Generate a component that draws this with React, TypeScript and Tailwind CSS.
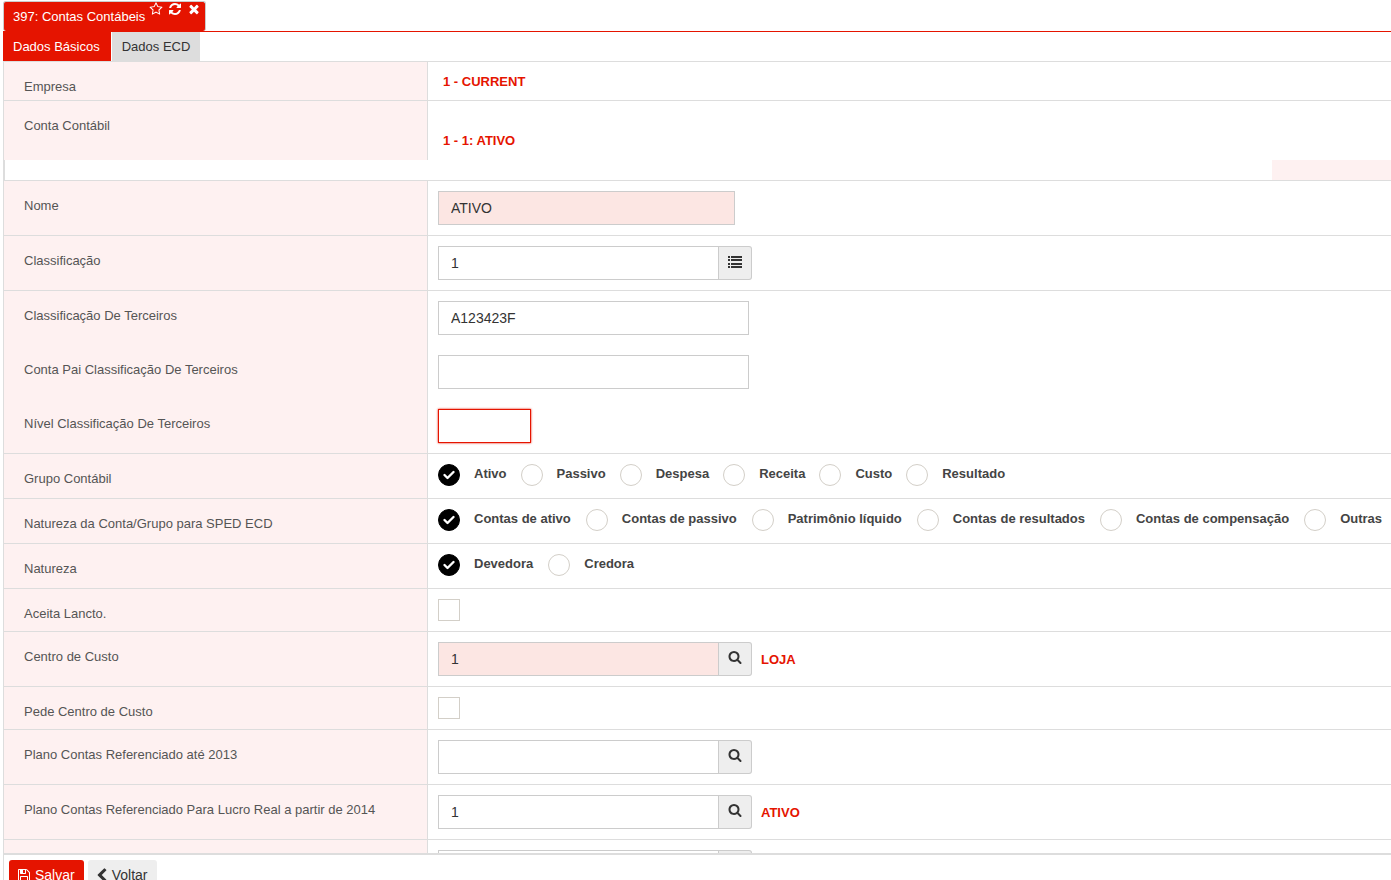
import { useState } from "react";
import type { ReactNode } from "react";

const icons = {
    star: "M1201 1004l306-297-422-62-189-382-189 382-422 62 306 297-73 421 378-199 377 199zm527-357q0 22-26 48l-363 354 86 500q1 7 1 20 0 50-41 50-19 0-40-12l-449-236-449 236q-22 12-40 12-21 0-31.5-14.5t-10.5-35.5q0-6 2-20l86-500-364-354q-25-27-25-48 0-37 56-46l502-73 225-455q19-41 49-41t49 41l225 455 502 73q56 9 56 46z",
    refresh: "M1639 1056q0 5-1 7-64 268-268 434.5t-478 166.5q-146 0-282.5-55t-243.5-157l-129 129q-19 19-45 19t-45-19-19-45v-448q0-26 19-45t45-19h448q26 0 45 19t19 45-19 45l-137 137q71 66 161 102t187 36q134 0 250-65t186-179q11-17 53-117 8-23 30-23h192q13 0 22.5 9.5t9.5 22.5zm25-800v448q0 26-19 45t-45 19h-448q-26 0-45-19t-19-45 19-45l138-138q-148-137-349-137-134 0-250 65t-186 179q-11 17-53 117-8 23-30 23h-199q-13 0-22.5-9.5t-9.5-22.5v-7q65-268 270-434.5t480-166.5q146 0 284 55.5t245 156.5l130-129q19-19 45-19t45 19 19 45z",
    close: "M1490 1322q0 40-28 68l-136 136q-28 28-68 28t-68-28l-294-294-294 294q-28 28-68 28t-68-28l-136-136q-28-28-28-68t28-68l294-294-294-294q-28-28-28-68t28-68l136-136q28-28 68-28t68 28l294 294 294-294q28-28 68-28t68 28l136 136q28 28 28 68t-28 68l-294 294 294 294q28 28 28 68z",
    search: "M1216 832q0-185-131.5-316.5t-316.5-131.5-316.5 131.5-131.5 316.5 131.5 316.5 316.5 131.5 316.5-131.5 131.5-316.5zm512 832q0 52-38 90t-90 38q-54 0-90-38l-343-342q-179 124-399 124-143 0-273.5-55.5t-225-150-150-225-55.5-273.5 55.5-273.5 150-225 225-150 273.5-55.5 273.5 55.5 225 150 150 225 55.5 273.5q0 220-124 399l343 343q37 37 37 90z",
    save: "M512 1536h768v-384h-768v384zm896 0h128v-896q0-14-10-38.5t-20-34.5l-281-281q-10-10-34-20t-39-10v416q0 40-28 68t-68 28h-576q-40 0-68-28t-28-68v-416h-128v1280h128v-416q0-40 28-68t68-28h832q40 0 68 28t28 68v416zm-384-928v-320q0-13-9.5-22.5t-22.5-9.5h-192q-13 0-22.5 9.5t-9.5 22.5v320q0 13 9.5 22.5t22.5 9.5h192q13 0 22.5-9.5t9.5-22.5zm640 32v928q0 40-28 68t-68 28h-1344q-40 0-68-28t-28-68v-1344q0-40 28-68t68-28h928q40 0 88 20t76 48l280 280q28 28 48 76t20 88z",
    back: "M1427 301l-531 531 531 531q19 19 19 45t-19 45l-166 166q-19 19-45 19t-45-19l-742-742q-19-19-19-45t19-45l742-742q19-19 45-19t45 19l166 166q19 19 19 45t-19 45z",
}

interface IconProps {
    name: keyof typeof icons;
    viewBox?: string;
    className?: string;
}

function Icon({ name, viewBox = "0 0 1792 1792", className = "size-[14px]" }: IconProps) {
    return (
        <svg viewBox={viewBox} className={`${className} shrink-0 fill-current`} aria-hidden="true">
            <path d={icons[name]} />
        </svg>
    )
}

function ListIcon() {
    return (
        <svg viewBox="0 0 14 14" className="size-[14px] fill-current" aria-hidden="true">
            {[2, 5, 9, 12].map(y => (
                <path key={y} d={`M0 ${y}h2v2h-2zM3 ${y}h11v2h-11z`} />
            ))}
        </svg>
    )
}

interface RowProps {
    label: string;
    htmlFor?: string;
    border?: boolean;
    children?: ReactNode;
}

function Row({ label, htmlFor, border = true, children }: RowProps) {
    return (
        <div className={border ? "flex shrink-0 border-b border-[#ddd]" : "flex shrink-0"}>
            <div className="w-[424px] shrink-0 border-r border-[#ddd] bg-[#fef1f1] pl-5 pt-[15px] text-[#555]">
                {htmlFor ? <label htmlFor={htmlFor}>{label}</label> : <span>{label}</span>}
            </div>
            <div className="flex min-w-0 flex-1 items-center whitespace-nowrap p-[10px]">
                {children}
            </div>
        </div>
    )
}

const fieldClass = "h-[34px] border border-[#ccc] px-3 text-sm text-[#333] outline-none"

interface LookupProps {
    id: string;
    value?: string;
    filled?: boolean;
    icon?: "list" | "search";
    result?: string;
}

function Lookup({ id, value = "", filled, icon = "search", result }: LookupProps) {
    return (
        <>
            <input
                id={id}
                type="text"
                defaultValue={value}
                className={`${fieldClass} w-[281px] ${filled ? "bg-[#fce6e3]" : "bg-white"}`}
            />
            <button
                type="button"
                aria-label="Pesquisar"
                className="flex h-[34px] w-[33px] items-center justify-center rounded-r-[3px] border border-l-0 border-[#ccc] bg-[#eee] pb-1 text-[#333]"
            >
                {icon === "list" ? <ListIcon /> : <Icon name="search" />}
            </button>
            {result && <strong className="ml-[9px] pt-px text-[#e51400]">{result}</strong>}
        </>
    )
}

interface RadioGroupProps {
    name: string;
    options: string[];
    gap?: string;
}

function RadioGroup({ name, options, gap = "gap-[15px]" }: RadioGroupProps) {
    const [selected, setSelected] = useState(options[0])

    return (
        <div role="radiogroup" className={`flex h-6 items-start ${gap}`}>
            {options.map(option => (
                <label key={option} className="flex items-start gap-[14px] font-bold leading-5 text-[#444]">
                    <span className="relative size-[22px]">
                        <input
                            type="radio"
                            name={name}
                            checked={selected === option}
                            onChange={() => setSelected(option)}
                            className="peer block size-[22px] appearance-none rounded-full border border-[#d3cfc8] bg-white checked:border-black checked:bg-black"
                        />
                        <svg viewBox="0 0 22 22" className="pointer-events-none absolute inset-0 hidden peer-checked:block" aria-hidden="true">
                            <path d="M6.5 11l3 3 6-6" fill="none" stroke="white" strokeWidth="2.4" strokeLinecap="round" strokeLinejoin="round" />
                        </svg>
                    </span>
                    {option}
                </label>
            ))}
        </div>
    )
}

function Checkbox({ id }: { id: string }) {
    return (
        <input
            id={id}
            type="checkbox"
            className="block size-[22px] appearance-none border border-[#d3cfc8] bg-white checked:bg-black"
        />
    )
}

export default function App() {
    return (
        <div className="flex h-screen flex-col overflow-hidden bg-white pl-[3px] font-['Liberation_Sans',Arial,sans-serif] text-[13px] leading-5 text-[#333]">
            <header className="flex shrink-0 border-b border-[#e51400] pt-px">
                <div className="flex h-[30px] rounded-[3px] border border-b-0 border-[#ccc] bg-[#e51400] pl-[9px] pr-1 text-white">
                    <span className="pt-[5px]">397: Contas Contábeis</span>
                    <div className="ml-1 flex items-start gap-[5px]">
                        <button type="button" aria-label="Favoritar"><Icon name="star" /></button>
                        <button type="button" aria-label="Atualizar"><Icon name="refresh" /></button>
                        <button type="button" aria-label="Fechar"><Icon name="close" /></button>
                    </div>
                </div>
            </header>

            <nav className="flex shrink-0">
                <button type="button" className="h-[29px] bg-[#e51400] pl-[10px] pr-[11px] text-white">Dados Básicos</button>
                <button type="button" className="h-[29px] border-l border-white bg-[#ddd] px-[10px] text-[#333]">Dados ECD</button>
            </nav>

            <main className="flex min-h-0 flex-1 flex-col overflow-hidden border-l border-t border-[#ddd]">
                <Row label="Empresa">
                    <strong className="-mb-px -mt-px pl-[5px] pt-px leading-[19px] text-[#e51400]">1 - CURRENT</strong>
                </Row>
                <Row label="Conta Contábil" border={false}>
                    <strong className="-mb-px pl-[5px] pt-5 text-[#e51400]">1 - 1: ATIVO</strong>
                </Row>
                <div className="flex h-[21px] shrink-0 justify-end border-b border-l border-[#ddd]">
                    <div className="w-[119px] bg-[#fef1f1]" />
                </div>
                <Row label="Nome" htmlFor="nome">
                    <input id="nome" type="text" defaultValue="ATIVO" className={`${fieldClass} w-[297px] bg-[#fce6e3]`} />
                </Row>
                <Row label="Classificação" htmlFor="classificacao">
                    <Lookup id="classificacao" value="1" icon="list" />
                </Row>
                <Row label="Classificação De Terceiros" htmlFor="terceiros" border={false}>
                    <input id="terceiros" type="text" defaultValue="A123423F" className={`${fieldClass} w-[311px]`} />
                </Row>
                <Row label="Conta Pai Classificação De Terceiros" htmlFor="contaPai" border={false}>
                    <input id="contaPai" type="text" className={`${fieldClass} w-[311px]`} />
                </Row>
                <Row label="Nível Classificação De Terceiros" htmlFor="nivel">
                    <input
                        id="nivel"
                        type="text"
                        className="h-[34px] w-[93px] border border-[#e51400] px-3 text-sm shadow-[0_0_2px_#e51400] outline-none"
                    />
                </Row>
                <Row label="Grupo Contábil">
                    <RadioGroup
                        name="grupo"
                        gap="gap-[14px]"
                        options={["Ativo", "Passivo", "Despesa", "Receita", "Custo", "Resultado"]}
                    />
                </Row>
                <Row label="Natureza da Conta/Grupo para SPED ECD">
                    <RadioGroup
                        name="naturezaSped"
                        options={[
                            "Contas de ativo",
                            "Contas de passivo",
                            "Patrimônio líquido",
                            "Contas de resultados",
                            "Contas de compensação",
                            "Outras",
                        ]}
                    />
                </Row>
                <Row label="Natureza">
                    <RadioGroup name="natureza" options={["Devedora", "Credora"]} />
                </Row>
                <Row label="Aceita Lancto." htmlFor="aceita">
                    <Checkbox id="aceita" />
                </Row>
                <Row label="Centro de Custo" htmlFor="centro">
                    <Lookup id="centro" value="1" filled result="LOJA" />
                </Row>
                <Row label="Pede Centro de Custo" htmlFor="pedeCentro">
                    <Checkbox id="pedeCentro" />
                </Row>
                <Row label="Plano Contas Referenciado até 2013" htmlFor="plano2013">
                    <Lookup id="plano2013" />
                </Row>
                <Row label="Plano Contas Referenciado Para Lucro Real a partir de 2014" htmlFor="plano2014">
                    <Lookup id="plano2014" value="1" result="ATIVO" />
                </Row>
                <Row label="">
                    <Lookup id="planoPresumido" />
                </Row>
            </main>

            <footer className="flex h-[27px] shrink-0 items-start gap-1 border-l border-t-2 border-[#ddd] pl-[5px] pt-[5px] text-sm">
                <button type="button" className="flex h-[34px] shrink-0 items-center gap-[5px] rounded-[3px] bg-[#e51400] px-[9px] pb-1 text-white">
                    <Icon name="save" viewBox="128 128 1536 1536" className="size-3" />
                    Salvar
                </button>
                <button type="button" className="flex h-[34px] shrink-0 items-center gap-[5px] rounded-[3px] bg-[#eee] px-[9px] pb-1 text-[#333]">
                    <Icon name="back" viewBox="384 0 1088 1664" className="h-[14px] w-[10px]" />
                    Voltar
                </button>
            </footer>
        </div>
    )
}
